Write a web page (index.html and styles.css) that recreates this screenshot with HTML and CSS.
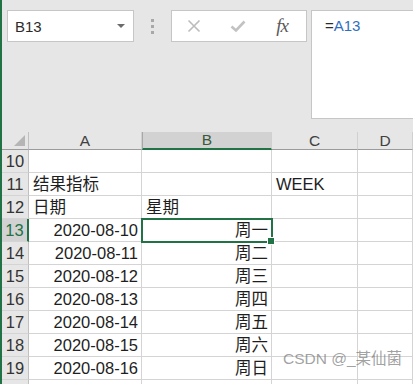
FILE: index.html
```html
<!DOCTYPE html>
<html lang="zh">
  <head>
    <meta charset="UTF-8" />
    <title>Sheet</title>
    <link rel="stylesheet" href="styles.css">
  </head>
  <body>
    <div class="app">
      <!-- Formula bar -->
      <div class="toolbar">
        <div class="namebox">
          <span>B13</span>
          <span class="caret"></span>
        </div>
        <div class="dots"><i></i><i></i><i></i></div>
        <div class="fxbar">
          <span class="slot">
            <svg width="14" height="14" viewBox="0 0 14 14"><path d="M1.5 1.5 L12.5 12.5 M12.5 1.5 L1.5 12.5" stroke="#bcbcbc" stroke-width="1.6" fill="none"/></svg>
          </span>
          <span class="slot">
            <svg width="16" height="14" viewBox="0 0 16 14"><path d="M1.5 7.5 L6 11.5 L14.5 2.5" stroke="#c2c2c2" stroke-width="2.6" fill="none"/></svg>
          </span>
          <span class="slot fx">fx</span>
        </div>
        <div class="formula">=<span class="ref">A13</span></div>
      </div>

      <!-- Sheet grid -->
      <div class="grid">
        <div class="corner"><span class="tri"></span></div>
        <div class="colhead">A</div>
        <div class="colhead sel">B</div>
        <div class="colhead">C</div>
        <div class="colhead">D</div>

        <div class="rowhead">10</div><div class="cell"></div><div class="cell"></div><div class="cell"></div><div class="cell"></div>
        <div class="rowhead">11</div><div class="cell">结果指标</div><div class="cell"></div><div class="cell">WEEK</div><div class="cell"></div>
        <div class="rowhead">12</div><div class="cell">日期</div><div class="cell">星期</div><div class="cell"></div><div class="cell"></div>
        <div class="rowhead sel">13</div><div class="cell num">2020-08-10</div><div class="cell num active">周一</div><div class="cell"></div><div class="cell"></div>
        <div class="rowhead">14</div><div class="cell num">2020-08-11</div><div class="cell num">周二</div><div class="cell"></div><div class="cell"></div>
        <div class="rowhead">15</div><div class="cell num">2020-08-12</div><div class="cell num">周三</div><div class="cell"></div><div class="cell"></div>
        <div class="rowhead">16</div><div class="cell num">2020-08-13</div><div class="cell num">周四</div><div class="cell"></div><div class="cell"></div>
        <div class="rowhead">17</div><div class="cell num">2020-08-14</div><div class="cell num">周五</div><div class="cell"></div><div class="cell"></div>
        <div class="rowhead">18</div><div class="cell num">2020-08-15</div><div class="cell num">周六</div><div class="cell"></div><div class="cell"></div>
        <div class="rowhead">19</div><div class="cell num">2020-08-16</div><div class="cell num">周日</div><div class="cell"></div><div class="cell"></div>
        <div class="rowhead"></div><div class="cell"></div><div class="cell"></div><div class="cell"></div><div class="cell"></div>
      </div>

      <div class="watermark">CSDN @_某仙菌</div>
    </div>
  </body>
</html>
```

FILE: styles.css
```css
* {
  margin: 0;
  padding: 0;
  box-sizing: border-box;
}

body {
  width: 413px;
  height: 384px;
  overflow: hidden;
  background-color: #e6e6e6;
  font-family: "Liberation Sans", "Noto Sans CJK SC", sans-serif;
  color: #1e1e1e;
}

.app {
  position: relative;
  height: 384px;
  border-left: 2px solid #217346;
}

/* toolbar */
.toolbar {
  display: flex;
  align-items: flex-start;
  height: 132px;
  padding: 10px 0 0 5px;
}

.namebox {
  width: 127px;
  height: 32px;
  background: #fff;
  border: 1px solid #c6c6c6;
  display: flex;
  align-items: center;
  justify-content: space-between;
  padding: 0 8px 0 7px;
  font-size: 15px;
  color: #2b2b2b;
}

.caret {
  width: 0;
  height: 0;
  border-left: 4px solid transparent;
  border-right: 4px solid transparent;
  border-top: 4px solid #6b6b6b;
}

.dots {
  display: flex;
  flex-direction: column;
  gap: 3px;
  margin: 9px 0 0 17px;
}

.dots i {
  width: 3px;
  height: 3px;
  background: #a8a8a8;
}

.fxbar {
  display: flex;
  align-items: center;
  width: 136px;
  height: 32px;
  margin-left: 17px;
  background: #fff;
  border: 1px solid #c6c6c6;
}

.slot {
  width: 44px;
  display: flex;
  justify-content: center;
  align-items: center;
}

.fx {
  font-family: "Liberation Serif", serif;
  font-style: italic;
  font-size: 19px;
  color: #5a5a5a;
  letter-spacing: -1px;
}

.formula {
  flex: 1;
  height: 109px;
  margin-left: 4px;
  margin-right: -3px;
  background: #fff;
  border: 1px solid #c6c6c6;
  padding: 5px 0 0 13px;
  font-size: 15px;
  line-height: 20px;
  color: #2b2b2b;
}

.ref {
  color: #2f6fc0;
}

/* grid */
.grid {
  display: grid;
  grid-template-columns: 27px 113px 130px 86px 1fr;
  grid-template-rows: 18px repeat(11, 23px);
  font-size: 16.5px;
}

.corner {
  position: relative;
  border-right: 1px solid #c0c0c0;
  border-bottom: 1px solid #9b9b9b;
}

.tri {
  position: absolute;
  right: 3px;
  bottom: 3px;
  width: 0;
  height: 0;
  border-left: 11px solid transparent;
  border-bottom: 11px solid #b5b5b5;
}

.colhead {
  display: flex;
  align-items: center;
  justify-content: center;
  border-right: 1px solid #d0d0d0;
  border-bottom: 1px solid #9b9b9b;
  color: #404040;
  font-size: 15.5px;
}

.colhead.sel {
  background: #d2d2d2;
  border-left: 1px solid #a8a8a8;
  border-bottom: 2px solid #217346;
  color: #3a5a3a;
}

.rowhead {
  display: flex;
  align-items: flex-end;
  justify-content: center;
  padding-bottom: 1px;
  line-height: 20px;
  border-right: 1px solid #c0c0c0;
  border-bottom: 1px solid #d4d4d4;
  color: #333;
}

.rowhead.sel {
  background: #d2d2d2;
  border-right: 2px solid #217346;
  color: #217346;
}

.cell {
  display: flex;
  align-items: flex-end;
  padding: 0 3px 1px 4px;
  line-height: 20px;
  white-space: nowrap;
  background: #fff;
  border-right: 1px solid #d4d4d4;
  border-bottom: 1px solid #d4d4d4;
}

.cell.num {
  justify-content: flex-end;
}

.cell.active {
  position: relative;
  outline: 2px solid #217346;
  outline-offset: -1px;
  z-index: 1;
}

.cell.active::after {
  content: "";
  position: absolute;
  right: -4px;
  bottom: -4px;
  width: 6px;
  height: 6px;
  background: #217346;
  border: 1px solid #fff;
}

.watermark {
  position: absolute;
  left: 281px;
  top: 346px;
  font-size: 15.5px;
  color: rgba(120, 120, 120, 0.7);
  white-space: nowrap;
}
```
